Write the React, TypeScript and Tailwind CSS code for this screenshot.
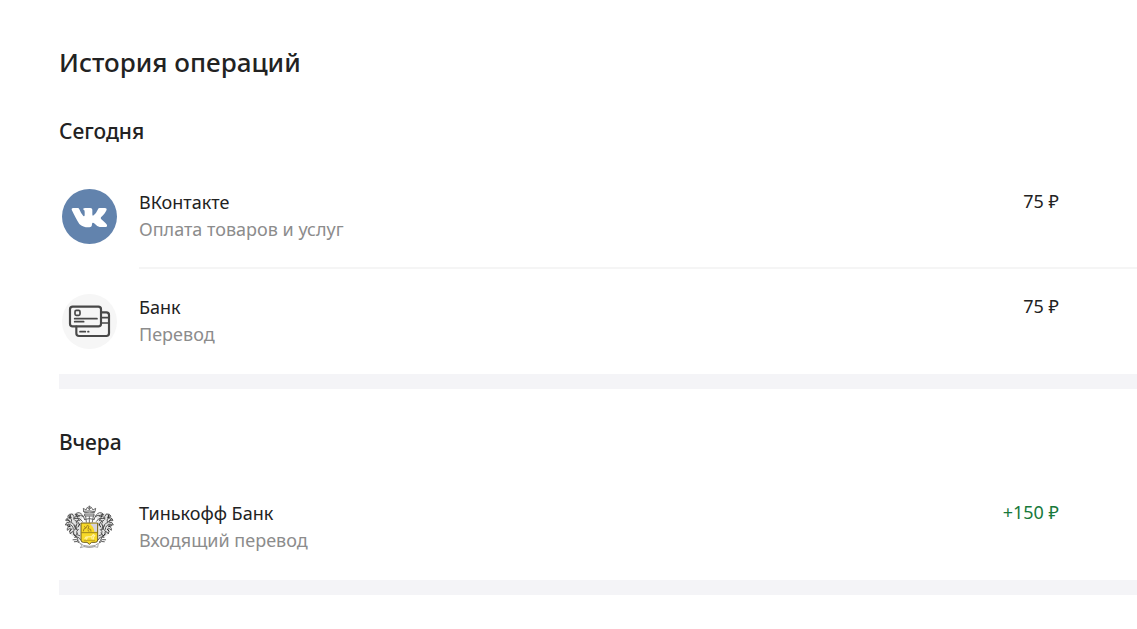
import type { ReactNode } from "react";

type Operation = {
  name: string;
  kind: string;
  amount: string;
  incoming?: boolean;
  icon: ReactNode;
};

type Day = { title: string; operations: Operation[] };

function VkLogo() {
  return (
    <svg viewBox="-24 -45 165 165" className="size-[55px]" aria-hidden="true">
      <circle cx="58.5" cy="37.5" r="82.5" fill="#6283ad" />
      <path
        fill="#fff"
        d="M9 12h14q4 0 5 4 6 15 12 20 4 2 4-4V23q0-6-5-7 1-4 7-4h15q6 0 6 5v14q0 6 4 3 8-6 13-18 1-4 5-4h16q6 0 5 5-3 9-17 23-2 3 1 6 13 11 17 17 2 6-4 6H89q-6 0-14-9-8-7-9 0 0 10-8 10-18 1-30-10Q18 44 5 17q-1-5 4-5z"
      />
    </svg>
  );
}

function CardsIcon() {
  return (
    <svg viewBox="36 24 165 165" className="size-[55px]" fill="none" aria-hidden="true">
      <circle cx="118.5" cy="106.5" r="82.5" fill="#f6f6f6" />
      <g stroke="#484848" strokeWidth="6.5" strokeLinecap="round" strokeLinejoin="round">
        <path d="M79 122v20q0 8 8 8h82q8 0 8-8V87q0-8-8-8h-14" />
        <rect x="60" y="62" width="93" height="59" rx="8" />
        <path d="M155 95h21M155 111h21" strokeWidth="5" />
        <rect x="75" y="73" width="15" height="15" rx="4" strokeWidth="5" />
        <path d="M74 98h67M74 107h27" strokeWidth="5" />
        <path d="M90 137h16M114 137h2" strokeWidth="5" />
      </g>
    </svg>
  );
}

function CrestSupporter() {
  return (
    <g stroke="#505050" strokeWidth="2.8" strokeLinecap="round" strokeLinejoin="round">
      <path d="M52 57q-14 6-18 18 0 18 7 30 4 14 16 20l20 10V84l8-22-16-8q-8 0-17 3z" fill="#e4e4e4" stroke="none" />
      <path d="M90 74q-5-18-17-21-9-1-12 7 10-4 13 4-12-3-16 7 11-5 17 5-12-2-10 8M86 65q-9-7-13-4M83 79q-7-12-16-9" />
      <path d="M52 57q-10-2-13 7 9-4 11 4-13-2-17 8 12-3 13 5-13 0-14 9 11-4 15 3-11 3-9 13 5-8 12-4-8 6-3 15 3-8 10-7-3 10 6 15 0-8 6-11M53 57q8 7 5 16M46 66q9 9 3 18M51 83q12 5 11 19M42 87q14 3 14 16M55 110q10-7 10-20M61 76q11 2 14 14M67 86q-8 8 0 18M58 91l8 14M71 103q-8 5-4 16l8 3" />
      <path d="M38 72l7 7M38 92l8 3M45 108l5-5M47 60l-2 10M65 59l4 8M57 117l6 6M75 87l-5 9" stroke="#222" />
      <path d="M60 127q12-5 18 8M55 134q11-4 19 6M65 124l5 11M59 140q9-3 15 3" />
    </g>
  );
}

function CrestLogo() {
  return (
    <svg viewBox="22 15 165 165" className="size-[55px]" fill="none" aria-hidden="true">
      {/* crown and helmet */}
      <g stroke="#555" strokeWidth="2.6" strokeLinecap="round" strokeLinejoin="round">
        <path d="M87 49l-1-9 8 5 4-8 6 7 6-7 5 8 8-5-2 10q-17-5-34-1z" fill="#fff" />
        <path d="M89 53q16-4 31 0M91 57h27v6H91z" fill="#ddd" />
        <path d="M93 64l2 17M116 64l-3 17M104 65v17M92 73q12-5 25 0" />
        <path d="M104 33v9M101 36h7" />
      </g>
      <CrestSupporter />
      <g transform="translate(208 0) scale(-1 1)">
        <CrestSupporter />
      </g>
      {/* shield */}
      <path d="M79 84h50v51q0 7-7 7h-11l-7 6-7-6H86q-7 0-7-7z" fill="#f7d929" stroke="#6e5d20" strokeWidth="3" />
      <path d="M108 86h19v24h-8q-1-14-11-21z" fill="#d5d2df" />
      <path d="M80 113h48" stroke="#8a7319" strokeWidth="2.5" />
      <path d="M86 109q0-10 8-10l4-8 5 3-3 7 8 2 1 7M94 99l-6-5M99 104l4 6" stroke="#a5851f" strokeWidth="3" />
      <path d="M90 133l4-7 17-1 5-6 4 3-4 5 1 7M98 127l-3 7M111 127l2 7" stroke="#fff3a6" strokeWidth="3.5" />
      <path d="M87 136h34" stroke="#a5851f" strokeWidth="2" />
      {/* motto ribbon */}
      <path d="M77 145l9 6q18 6 36 0l9-6-2 12-9-2q-16 5-32 0l-11 3 4-6z" fill="#fff" stroke="#777" strokeWidth="2" />
      <path d="M88 154q16 4 33 0" stroke="#999" strokeWidth="3" strokeDasharray="3 2" />
    </svg>
  );
}

const days: Day[] = [
  {
    title: "Сегодня",
    operations: [
      { name: "ВКонтакте", kind: "Оплата товаров и услуг", amount: "75 ₽", icon: <VkLogo /> },
      { name: "Банк", kind: "Перевод", amount: "75 ₽", icon: <CardsIcon /> },
    ],
  },
  {
    title: "Вчера",
    operations: [
      { name: "Тинькофф Банк", kind: "Входящий перевод", amount: "+150 ₽", incoming: true, icon: <CrestLogo /> },
    ],
  },
];

function OperationRow({ operation }: { operation: Operation }) {
  return (
    <li className="group flex">
      <div className="w-20 shrink-0 pt-[25px] pl-[3px]">{operation.icon}</div>
      <div className="flex grow justify-between border-b-2 border-[#f5f5f5] pt-[25px] pr-[78px] pb-6 group-last:border-transparent">
        <div>
          <p className="text-[#222]">{operation.name}</p>
          <p className="text-[#8c8c8c]">{operation.kind}</p>
        </div>
        <p className={operation.incoming ? "leading-[25px] text-[#18793b]" : "leading-[25px] text-[#222]"}>
          {operation.amount}
        </p>
      </div>
    </li>
  );
}

export default function App() {
  return (
    <main className="min-h-screen bg-white pt-[47px] pb-8 pl-[59px] font-['Noto_Sans',sans-serif] text-[18px] leading-[27px]">
      <h1 className="text-[26px] leading-[31px] font-medium text-[#222]">История операций</h1>
      {days.map((day) => (
        <section key={day.title} className="border-b-15 border-[#f4f4f7] pt-[39px]">
          <h2 className="pb-[19px] text-[21px] leading-7 font-medium text-[#222]">{day.title}</h2>
          <ul>
            {day.operations.map((operation) => (
              <OperationRow key={operation.name} operation={operation} />
            ))}
          </ul>
        </section>
      ))}
    </main>
  );
}
